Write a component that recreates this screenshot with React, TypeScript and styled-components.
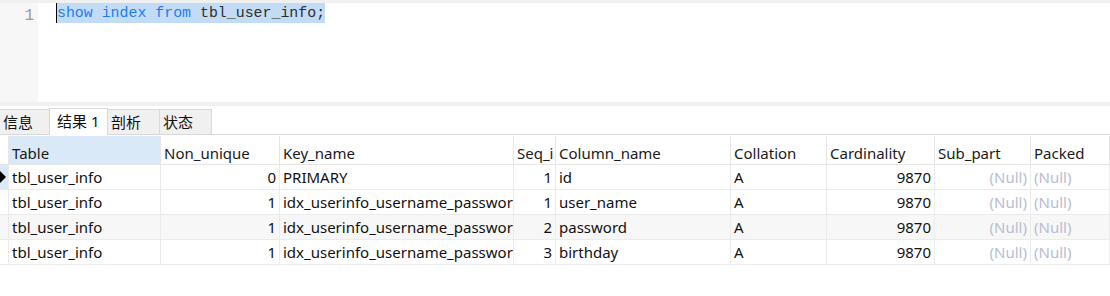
import React from "react";
import styled, { createGlobalStyle } from "styled-components";

const GlobalStyle = createGlobalStyle`
  html, body {
    margin: 0;
    padding: 0;
    background: #ffffff;
  }
  body {
    font-family: "Noto Sans", "Noto Sans CJK SC", sans-serif;
    font-size: 15px;
    color: #1a1a1a;
  }
`;

const Page = styled.div`
  width: 1110px;
  height: 296px;
  overflow: hidden;
  background: #ffffff;
`;

const TopStrip = styled.div`
  height: 3px;
  background: #f0f0f0;
`;

const Editor = styled.div`
  display: flex;
  height: 99px;
`;

const Gutter = styled.div`
  width: 38px;
  background: #f7f7f7;
  color: #9a9a9a;
  font-family: "Liberation Mono", monospace;
  font-size: 16px;
  text-align: right;
  padding: 3px 4px 0 0;
  box-sizing: border-box;
  line-height: 20px;
`;

const CodeArea = styled.div`
  flex: 1;
  padding-left: 18px;
  font-family: "Liberation Mono", monospace;
  font-size: 14.9px;
  line-height: 20px;
`;

const CodeLine = styled.div`
  display: inline-block;
  background: #c2dcf5;
  border-left: 1px solid #000;
  height: 20px;
  white-space: pre;
`;

const Token = styled.span<{ $kw?: boolean }>`
  color: ${(p) => (p.$kw ? "#1f7cf3" : "#2e2e2e")};
`;

const Splitter = styled.div`
  height: 4px;
  background: #f0f0f0;
`;

const TabBar = styled.div`
  display: flex;
  align-items: flex-end;
  height: 27px;
  margin-top: 1px;
  border-bottom: 1px solid #d9d9d9;
`;

const Tab = styled.div<{ $active?: boolean; $first?: boolean; $w: number }>`
  width: ${(p) => p.$w}px;
  height: ${(p) => (p.$active ? 27 : 25)}px;
  box-sizing: border-box;
  background: ${(p) => (p.$active ? "#ffffff" : "#f0f0f0")};
  border: 1px solid #d9d9d9;
  border-bottom: none;
  border-left: ${(p) => (p.$first ? "none" : "1px solid #d9d9d9")};
  margin-bottom: ${(p) => (p.$active ? "-1px" : "0")};
  padding-left: ${(p) => (p.$active ? 7 : 3)}px;
  font-size: 15px;
  line-height: ${(p) => (p.$active ? 25 : 24)}px;
  color: #111;
  & + & {
    margin-left: -1px;
  }
`;

const Grid = styled.div`
  display: grid;
  grid-template-columns: 9px 152px 119px 234px 42px 175px 96px 108px 96px 1fr;
  margin-top: 1px;
`;

const HeadCell = styled.div<{ $sel?: boolean }>`
  height: 29px;
  box-sizing: border-box;
  padding: 7px 0 0 3px;
  background: ${(p) => (p.$sel ? "#d9e9f8" : "#ffffff")};
  border-right: 1px solid #e6e6e6;
  border-bottom: 1px solid #e6e6e6;
  line-height: 20px;
  white-space: nowrap;
  overflow: hidden;
`;

const Cell = styled.div<{ $right?: boolean; $null?: boolean; $alt?: boolean }>`
  height: 25px;
  box-sizing: border-box;
  padding: 0 3px 0 3px;
  background: ${(p) => (p.$alt ? "#f7f7f7" : "#ffffff")};
  border-right: 1px solid #ebebeb;
  border-bottom: 1px solid #ebebeb;
  line-height: 24px;
  text-align: ${(p) => (p.$right ? "right" : "left")};
  color: ${(p) => (p.$null ? "#b6bed3" : "#111111")};
  white-space: nowrap;
  overflow: hidden;
  text-overflow: clip;
`;

const Indicator = styled.div<{ $current?: boolean; $alt?: boolean }>`
  height: 25px;
  box-sizing: border-box;
  background: ${(p) => (p.$current ? "#d9e9f8" : p.$alt ? "#f7f7f7" : "#ffffff")};
  border-right: 1px solid #ebebeb;
  border-bottom: 1px solid #ebebeb;
  display: flex;
  align-items: center;
`;

const Arrow = styled.div`
  width: 0;
  height: 0;
  border-top: 6px solid transparent;
  border-bottom: 6px solid transparent;
  border-left: 6px solid #000;
`;

const columns = [
  "Table",
  "Non_unique",
  "Key_name",
  "Seq_i",
  "Column_name",
  "Collation",
  "Cardinality",
  "Sub_part",
  "Packed",
];

const rows = [
  { nonUnique: "0", key: "PRIMARY", seq: "1", col: "id" },
  { nonUnique: "1", key: "idx_userinfo_username_password", seq: "1", col: "user_name" },
  { nonUnique: "1", key: "idx_userinfo_username_password", seq: "2", col: "password" },
  { nonUnique: "1", key: "idx_userinfo_username_password", seq: "3", col: "birthday" },
];

const tabs = [
  { label: "信息", w: 50 },
  { label: "结果 1", w: 59, active: true },
  { label: "剖析", w: 53 },
  { label: "状态", w: 53 },
];

export default function App() {
  return (
    <Page>
      <GlobalStyle />
      <TopStrip />
      <Editor>
        <Gutter>1</Gutter>
        <CodeArea>
          <CodeLine>
            <Token $kw>show</Token> <Token $kw>index</Token> <Token $kw>from</Token>{" "}
            <Token>tbl_user_info;</Token>
          </CodeLine>
        </CodeArea>
      </Editor>
      <Splitter />
      <TabBar>
        {tabs.map((t, i) => (
          <Tab key={t.label} $w={t.w} $active={t.active} $first={i === 0}>
            {t.label}
          </Tab>
        ))}
      </TabBar>
      <Grid>
        <HeadCell />
        {columns.map((c, i) => (
          <HeadCell key={c} $sel={i === 0}>
            {c}
          </HeadCell>
        ))}
        {rows.map((r, i) => {
          const alt = i === 2;
          return (
            <React.Fragment key={i}>
              <Indicator $current={i === 0} $alt={alt}>
                {i === 0 && <Arrow />}
              </Indicator>
              <Cell $alt={alt}>tbl_user_info</Cell>
              <Cell $alt={alt} $right>
                {r.nonUnique}
              </Cell>
              <Cell $alt={alt}>{r.key}</Cell>
              <Cell $alt={alt} $right>
                {r.seq}
              </Cell>
              <Cell $alt={alt}>{r.col}</Cell>
              <Cell $alt={alt}>A</Cell>
              <Cell $alt={alt} $right>
                9870
              </Cell>
              <Cell $alt={alt} $right $null>
                (Null)
              </Cell>
              <Cell $alt={alt} $null>
                (Null)
              </Cell>
            </React.Fragment>
          );
        })}
      </Grid>
    </Page>
  );
}
